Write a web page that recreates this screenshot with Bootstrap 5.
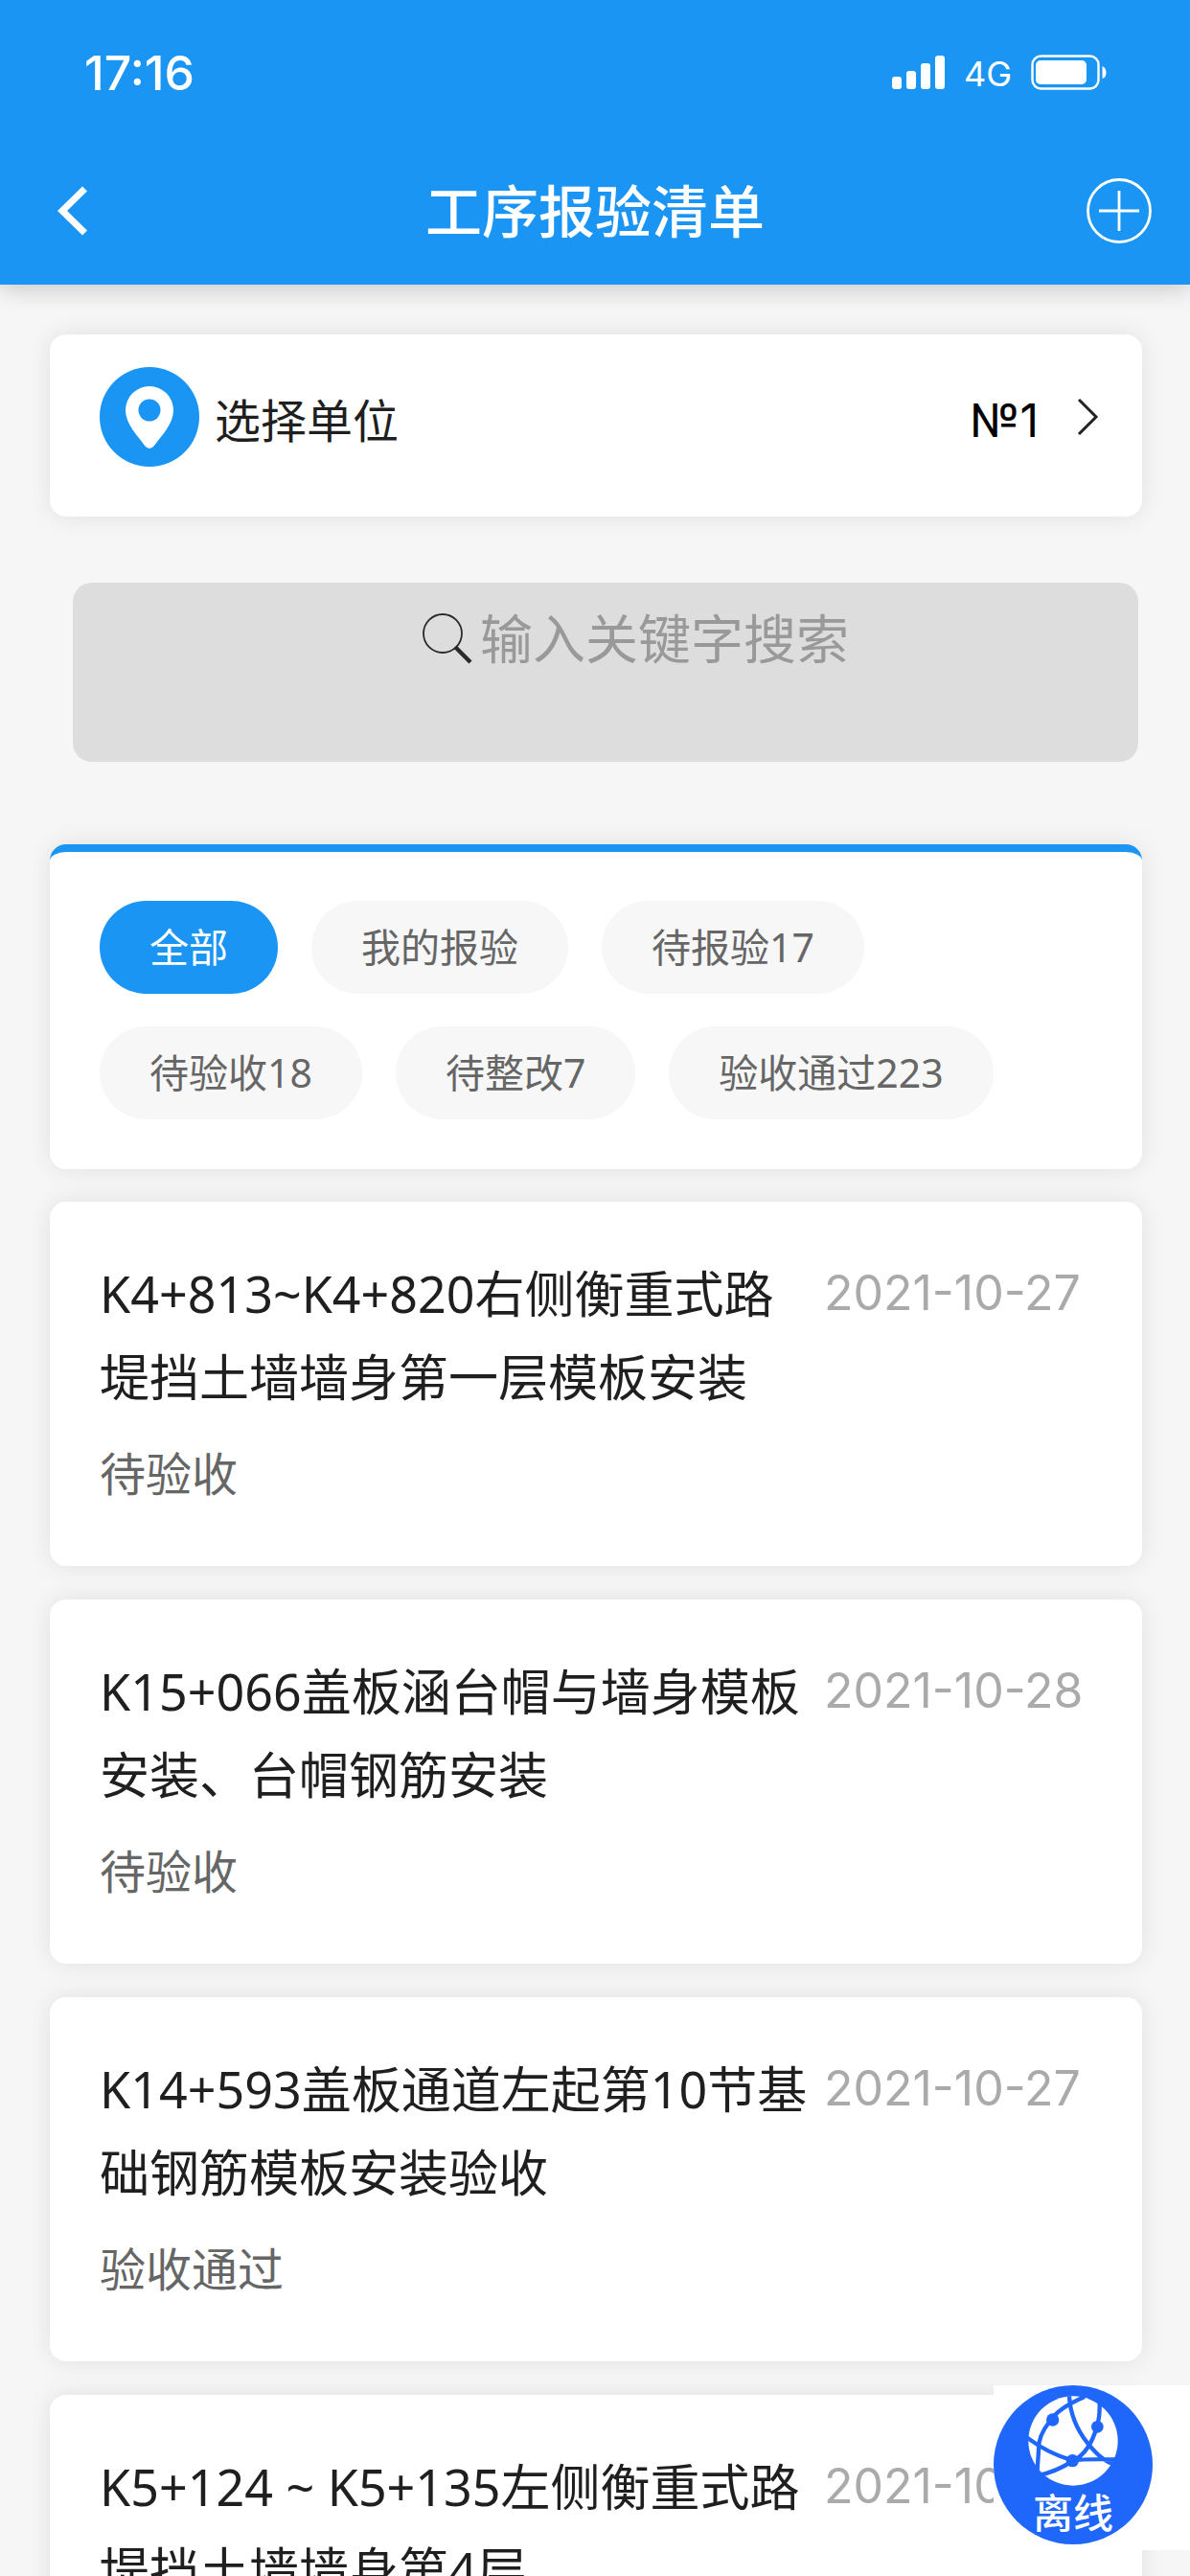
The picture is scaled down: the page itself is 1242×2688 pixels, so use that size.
<!DOCTYPE html>
<html lang="zh-CN">
<head>
<meta charset="utf-8">
<meta name="viewport" content="width=device-width, initial-scale=1">
<title>工序报验清单</title>
<link href="https://cdn.jsdelivr.net/npm/bootstrap@5.3.0/dist/css/bootstrap.min.css" rel="stylesheet">
<style>
  :root { --brand: #1a95f3; }
  body { background: #f6f6f6; color: #1f1f1f; font-family: "Noto Sans", "Noto Sans CJK SC", sans-serif; }
  svg { display: block; flex: none; }
  .app-head { background: var(--brand); box-shadow: 0 4px 24px rgba(0,0,0,.2); z-index: 2; }
  .status-line { height: 152px; padding: 0 86px 0 88px; font-family: Inter, sans-serif; }
  .clock { font-size: 50px; font-weight: 500; line-height: 50px; }
  .net { font-size: 36px; line-height: 36px; margin: 2px 20px 0; }
  .title-line { height: 145px; padding: 0 40px 9px 60px; }
  .title-line h1 { font-size: 59px; font-weight: 500; line-height: 80px; margin: 0; }
  .back { width: 48px; }
  .feed { padding: 52px 50px 0 52px; scrollbar-width: none; min-height: 0; }
  .feed::-webkit-scrollbar { display: none; }
  .panel { background: #fff; border-radius: 17px; box-shadow: 0 0 26px rgba(0,0,0,.09); }
  .unit { padding: 34px 44px 52px 52px; font-size: 48px; line-height: 96px; }
  .unit-value { font-family: Inter, "Noto Sans", sans-serif; margin-right: 40px; }
  .finder { margin: 69px 4px 86px 24px; height: 187px; padding: 16px 0 0 126px; border-radius: 20px; background: #ddd; }
  .finder input { width: 448px; padding: 0; border: 0; background: none; box-shadow: none; font-size: 55px; line-height: 84px; height: 84px; }
  .finder input::placeholder { color: #999; opacity: 1; }
  .tabs { border-top: 8px solid var(--brand); padding: 51px 52px 52px; gap: 34px 35px; margin-bottom: 34px; }
  .tabs .btn { background: #f7f7f7; color: #666; border: 0; border-radius: 49px; padding: 0 52px; font-size: 41px; line-height: 97px; }
  .tabs .btn.active { background: var(--brand); color: #fff; }
  .entry { padding: 52px 52px 51px; margin-bottom: 35px; }
  .entry h2 { font-size: 52px; font-weight: 400; line-height: 87px; margin: 0; width: 748px; }
  .entry time { font-family: Inter, sans-serif; font-size: 50px; line-height: 87px; color: #aaa; width: 280px; flex: none; white-space: nowrap; }
  .entry p { font-size: 48px; line-height: 90px; color: #666; margin: 13px 0 0; }
  .dock { right: 0; bottom: 27px; width: 205px; height: 172px; background: #fff; z-index: 3; }
  .dock .btn { width: 166px; height: 166px; background: #1f66fa; color: #fff; font-size: 42px; font-weight: 500; line-height: 50px; border: 0; }
</style>
</head>
<body class="vh-100 overflow-hidden d-flex flex-column">
<header class="app-head text-white position-relative">
  <div class="status-line d-flex align-items-center">
    <span class="clock me-auto">17:16</span>
    <svg width="55" height="36" viewBox="0 0 55 36" fill="#fff"><rect y="22" width="10" height="13" rx="3"/><rect x="15" y="16" width="10" height="19" rx="3"/><rect x="30" y="8" width="10" height="27" rx="3"/><rect x="45" width="10" height="35" rx="3"/></svg>
    <span class="net">4G</span>
    <svg width="80" height="38" viewBox="0 0 80 38"><rect x="1.500" y="1.500" width="69" height="34" rx="9" fill="none" stroke="#fff" stroke-width="2.400"/><rect x="5" y="6" width="53" height="25" rx="5" fill="#fff"/><path d="M74.500 12q4 2 4 7t-4 6z" fill="#fff"/></svg>
  </div>
  <div class="title-line d-flex align-items-center justify-content-between">
    <a href="#" class="back" aria-label="返回"><svg width="32" height="52" viewBox="0 0 32 52" fill="none" stroke="#fff" stroke-width="7"><path d="M28.500 3 5 26l23.500 23"/></svg></a>
    <h1>工序报验清单</h1>
    <a href="#" aria-label="新增"><svg width="68" height="68" viewBox="0 0 68 68" fill="none" stroke="#fff" stroke-width="2.800"><circle cx="34" cy="34" r="32.500"/><path d="M34 13v42M13 34h42"/></svg></a>
  </div>
</header>

<main class="feed flex-grow-1 overflow-auto">
  <a href="#" class="panel unit d-flex align-items-center text-reset text-decoration-none">
    <svg width="104" height="104" viewBox="0 0 104 104"><circle cx="52" cy="52" r="52" fill="#1a95f3"/><path d="M52 20a25 25 0 0 0-25 25c0 14 12 26 20 37q5 6 10 0c8-11 20-23 20-37a25 25 0 0 0-25-25z" fill="#fff"/><circle cx="52" cy="45" r="11.500" fill="#1a95f3"/></svg>
    <span class="ms-3 me-auto pt-2">选择单位</span>
    <span class="unit-value text-black pt-2">№1</span>
    <svg width="24" height="40" viewBox="0 0 24 40" fill="none" stroke="#222" stroke-width="3"><path d="M2 2l18 18L2 38"/></svg>
  </a>

  <form class="finder d-flex align-items-start justify-content-center" role="search">
    <svg class="mt-3" width="52" height="54" viewBox="0 0 52 54" fill="none" stroke="#2a2a2a"><circle cx="21" cy="21" r="20" stroke-width="1.800"/><path d="M34 35l16 16" stroke-width="4.500"/></svg>
    <input class="ms-2" type="search" placeholder="输入关键字搜索" aria-label="输入关键字搜索">
  </form>

  <nav class="panel tabs d-flex flex-wrap" aria-label="筛选">
    <button type="button" class="btn active">全部</button>
    <button type="button" class="btn">我的报验</button>
    <button type="button" class="btn">待报验17</button>
    <button type="button" class="btn">待验收18</button>
    <button type="button" class="btn">待整改7</button>
    <button type="button" class="btn">验收通过223</button>
  </nav>

  <article class="panel entry">
    <div class="d-flex justify-content-between"><h2>K4+813~K4+820右侧衡重式路堤挡土墙墙身第一层模板安装</h2><time>2021-10-27</time></div>
    <p>待验收</p>
  </article>
  <article class="panel entry">
    <div class="d-flex justify-content-between"><h2>K15+066盖板涵台帽与墙身模板安装、台帽钢筋安装</h2><time>2021-10-28</time></div>
    <p>待验收</p>
  </article>
  <article class="panel entry">
    <div class="d-flex justify-content-between"><h2>K14+593盖板通道左起第10节基础钢筋模板安装验收</h2><time>2021-10-27</time></div>
    <p>验收通过</p>
  </article>
  <article class="panel entry">
    <div class="d-flex justify-content-between"><h2>K5+124 ~ K5+135左侧衡重式路堤挡土墙墙身第4层</h2><time>2021-10-27</time></div>
  </article>
</main>

<aside class="dock position-fixed">
  <button type="button" class="btn rounded-circle p-0 d-flex flex-column align-items-center">
    <svg class="mt-2" width="96" height="100" viewBox="0 0 288 300">
      <circle cx="144" cy="150" r="140" fill="#fff"/>
      <g fill="none" stroke="#1f66fa" stroke-width="13">
        <path d="M180 12Q96 48 70 90 34 135 36 180L32 240M0 140Q66 190 144 212 172 206 278 208M132 10Q136 90 190 158T290 226M226 20Q230 70 218 106 196 186 144 212 90 248 34 258"/>
      </g>
      <g fill="#1f66fa"><circle cx="80" cy="84" r="20"/><circle cx="220" cy="106" r="19"/><circle cx="142" cy="212" r="20"/><path d="M0 170l20 66-24-6z"/></g>
    </svg>
    <span>离线</span>
  </button>
</aside>
<script src="https://cdn.jsdelivr.net/npm/bootstrap@5.3.0/dist/js/bootstrap.bundle.min.js"></script>
</body>
</html>
